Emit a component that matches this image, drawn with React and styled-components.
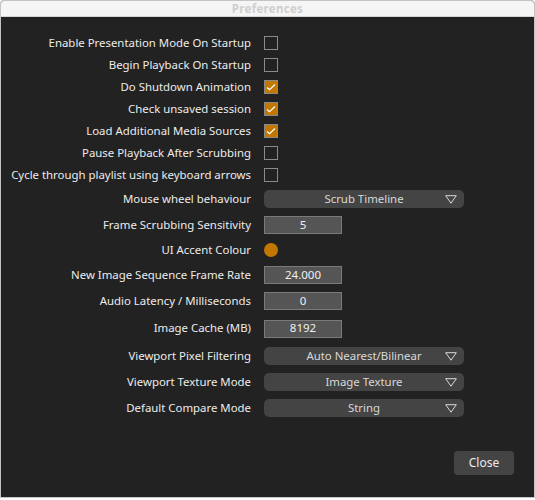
import React from 'react';
import styled, { createGlobalStyle } from 'styled-components';

const GlobalStyle = createGlobalStyle`
  html, body {
    margin: 0;
    padding: 0;
    background: #ffffff;
  }
  body {
    font-family: "Noto Sans", "DejaVu Sans", sans-serif;
  }
`;

const Window = styled.div`
  width: 535px;
  height: 498px;
  box-sizing: border-box;
  border: 1px solid #c4c4c4;
  border-top-left-radius: 4px;
  border-top-right-radius: 4px;
  display: flex;
  flex-direction: column;
  overflow: hidden;
  background: #222222;
`;

const TitleBar = styled.div`
  height: 15px;
  flex: 0 0 auto;
  background: #f5f5f5;
  border-bottom: 1px solid #d6d6d6;
  display: flex;
  align-items: center;
  justify-content: center;
  font-size: 11.5px;
  font-weight: 700;
  color: #cfcfcf;
  letter-spacing: 0.3px;
`;

const Body = styled.div`
  flex: 1;
  display: flex;
  flex-direction: column;
  padding-top: 15px;
`;

const Form = styled.div`
  display: grid;
  grid-template-columns: 250px 1fr;
  column-gap: 13px;
`;

const Label = styled.div`
  height: ${p => p.h}px;
  box-sizing: border-box;
  padding-bottom: 2px;
  display: flex;
  align-items: center;
  justify-content: flex-end;
  font-size: 11.4px;
  color: #ececec;
  white-space: nowrap;
`;

const Cell = styled.div`
  height: ${p => p.h}px;
  display: flex;
  align-items: center;
`;

const Box = styled.div`
  width: 14px;
  height: 14px;
  box-sizing: border-box;
  border: 1px solid #8a8a8a;
  background: ${p => (p.checked ? '#c07800' : 'transparent')};
  display: flex;
  align-items: center;
  justify-content: center;
`;

const Combo = styled.div`
  width: 200px;
  height: 18px;
  box-sizing: border-box;
  background: #444444;
  border-radius: 5px;
  position: relative;
  display: flex;
  align-items: center;
  justify-content: center;
  padding-bottom: 1px;
  font-size: 11.4px;
  color: #d8d8d8;
`;

const Arrow = styled.svg`
  position: absolute;
  right: 7px;
  top: 5px;
`;

const Field = styled.div`
  width: 78px;
  height: 18px;
  box-sizing: border-box;
  background: #555555;
  border: 1px solid #7a7a7a;
  padding-bottom: 2px;
  display: flex;
  align-items: center;
  justify-content: center;
  font-size: 11.5px;
  color: #f0f0f0;
`;

const Swatch = styled.div`
  width: 14px;
  height: 14px;
  border-radius: 50%;
  background: #c07800;
`;

const Footer = styled.div`
  display: flex;
  justify-content: flex-end;
  padding: 30px 20px 0 0;
`;

const Button = styled.div`
  width: 60px;
  height: 24px;
  box-sizing: border-box;
  padding-bottom: 2px;
  border-radius: 4px;
  background: #444444;
  display: flex;
  align-items: center;
  justify-content: center;
  font-size: 12px;
  color: #ececec;
`;

const Check = () => (
  <svg width="12" height="12" viewBox="0 0 12 12">
    <path d="M2 6.5 L4.5 8.8 L10 3.5" fill="none" stroke="#ffffff" strokeWidth="1.2" />
  </svg>
);

const rows = [
  { label: 'Enable Presentation Mode On Startup', type: 'check', value: false, h: 22 },
  { label: 'Begin Playback On Startup', type: 'check', value: false, h: 22 },
  { label: 'Do Shutdown Animation', type: 'check', value: true, h: 22 },
  { label: 'Check unsaved session', type: 'check', value: true, h: 22 },
  { label: 'Load Additional Media Sources', type: 'check', value: true, h: 22 },
  { label: 'Pause Playback After Scrubbing', type: 'check', value: false, h: 22 },
  { label: 'Cycle through playlist using keyboard arrows', type: 'check', value: false, h: 22 },
  { label: 'Mouse wheel behaviour', type: 'combo', value: 'Scrub Timeline', h: 26 },
  { label: 'Frame Scrubbing Sensitivity', type: 'field', value: '5', h: 26 },
  { label: 'UI Accent Colour', type: 'colour', h: 24 },
  { label: 'New Image Sequence Frame Rate', type: 'field', value: '24.000', h: 26 },
  { label: 'Audio Latency / Milliseconds', type: 'field', value: '0', h: 26 },
  { label: 'Image Cache (MB)', type: 'field', value: '8192', h: 29 },
  { label: 'Viewport Pixel Filtering', type: 'combo', value: 'Auto Nearest/Bilinear', h: 26 },
  { label: 'Viewport Texture Mode', type: 'combo', value: 'Image Texture', h: 26 },
  { label: 'Default Compare Mode', type: 'combo', value: 'String', h: 26 },
];

const Control = ({ row }) => {
  if (row.type === 'check') {
    return <Box checked={row.value}>{row.value && <Check />}</Box>;
  }
  if (row.type === 'combo') {
    return (
      <Combo>
        {row.value}
        <Arrow width="12" height="9" viewBox="0 0 12 9">
          <path d="M0.7 0.7 H11.3 L6 8.2 Z" fill="none" stroke="#d8d8d8" strokeWidth="1" />
        </Arrow>
      </Combo>
    );
  }
  if (row.type === 'field') return <Field>{row.value}</Field>;
  return <Swatch />;
};

export default function App() {
  return (
    <>
      <GlobalStyle />
      <Window>
        <TitleBar>Preferences</TitleBar>
        <Body>
          <Form>
            {rows.map(row => (
              <React.Fragment key={row.label}>
                <Label h={row.h}>{row.label}</Label>
                <Cell h={row.h}>
                  <Control row={row} />
                </Cell>
              </React.Fragment>
            ))}
          </Form>
          <Footer>
            <Button>Close</Button>
          </Footer>
        </Body>
      </Window>
    </>
  );
}
